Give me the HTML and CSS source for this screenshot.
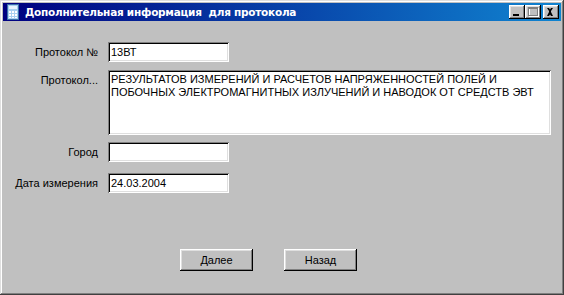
FILE: index.html
```html
<!DOCTYPE html>
<html lang="ru">
<head>
    <meta charset="UTF-8">
    <title>Дополнительная информация для протокола</title>
    <link rel="stylesheet" href="styles.css">
</head>
<body>

<div class="window">
    <div class="titlebar">
        <svg class="app-icon" width="16" height="16" viewBox="0 0 16 16">
            <rect x="2.5" y="0.5" width="11" height="15" fill="#a8d0f0" stroke="#3a6ea8"/>
            <rect x="4" y="2" width="8" height="3" fill="#e8f4ff"/>
            <g fill="#ffffff">
                <rect x="4" y="7" width="2" height="2"/>
                <rect x="7" y="7" width="2" height="2"/>
                <rect x="10" y="7" width="2" height="2"/>
                <rect x="4" y="10" width="2" height="2"/>
                <rect x="7" y="10" width="2" height="2"/>
                <rect x="10" y="10" width="2" height="2"/>
                <rect x="4" y="13" width="2" height="1"/>
                <rect x="7" y="13" width="2" height="1"/>
                <rect x="10" y="13" width="2" height="1"/>
            </g>
        </svg>
        <span class="title">Дополнительная информация&nbsp; для протокола</span>
        <div class="controls">
            <span class="ctl">
                <svg width="16" height="14" viewBox="0 0 16 14"><rect x="4" y="9" width="6" height="2" fill="#000"/></svg>
            </span>
            <span class="ctl">
                <svg width="16" height="14" viewBox="0 0 16 14">
                    <rect x="4.5" y="3.5" width="9" height="8" fill="none" stroke="#fff"/>
                    <rect x="3.5" y="2.5" width="9" height="8" fill="none" stroke="#808080"/>
                    <rect x="3" y="3" width="10" height="1" fill="#808080"/>
                </svg>
            </span>
            <span class="ctl close">
                <svg width="16" height="14" viewBox="0 0 16 14">
                    <path d="M4 3h2l1 1.5L8 3h2L8 6v1l2 4H8L7 9.5 6 11H4l2-4V6z" fill="#000"/>
                </svg>
            </span>
        </div>
    </div>

    <div class="content">
        <div class="row first">
            <span class="label">Протокол №</span>
            <div class="field short">13ВТ</div>
        </div>
        <div class="row memo-row">
            <span class="label">Протокол...</span>
            <div class="field memo">РЕЗУЛЬТАТОВ ИЗМЕРЕНИЙ И РАСЧЕТОВ НАПРЯЖЕННОСТЕЙ ПОЛЕЙ И<br>ПОБОЧНЫХ ЭЛЕКТРОМАГНИТНЫХ ИЗЛУЧЕНИЙ И НАВОДОК ОТ СРЕДСТВ ЭВТ</div>
        </div>
        <div class="row city-row">
            <span class="label">Город</span>
            <div class="field short"></div>
        </div>
        <div class="row">
            <span class="label">Дата измерения</span>
            <div class="field short">24.03.2004</div>
        </div>

        <div class="actions">
            <button class="btn">Далее</button>
            <button class="btn">Назад</button>
        </div>
    </div>
</div>

</body>
</html>
```

FILE: styles.css
```css
body {
    margin: 0;
    font-family: "Liberation Sans", Arial, sans-serif;
    font-size: 11px;
    color: #000;
    background: #c0c0c0;
}
.window {
    width: 564px;
    height: 295px;
    box-sizing: border-box;
    padding: 3px;
    background: #c0c0c0;
    box-shadow: inset -1px -1px #404040, inset 1px 1px #dfdfdf,
                inset -2px -2px #808080, inset 2px 2px #fff;
}
.titlebar {
    height: 18px;
    display: flex;
    align-items: center;
    background: linear-gradient(90deg, #000080, #1084d0);
    color: #fff;
    padding-left: 2px;
}
.app-icon {
    flex: none;
    margin-right: 4px;
}
.title {
    font-family: "DejaVu Sans", Verdana, sans-serif;
    font-weight: bold;
    font-size: 10.5px;
    letter-spacing: -0.25px;
    white-space: nowrap;
}
.controls {
    margin-left: auto;
    margin-right: 2px;
    display: flex;
}
.ctl {
    width: 16px;
    height: 14px;
    background: #c0c0c0;
    box-shadow: inset -1px -1px #000, inset 1px 1px #fff,
                inset -2px -2px #808080, inset 2px 2px #dfdfdf;
}
.ctl svg {
    display: block;
}
.ctl.close {
    margin-left: 2px;
}
.content {
    padding: 21px 0 0 8px;
}
.row {
    display: flex;
    align-items: center;
    gap: 10px;
    margin-bottom: 11px;
}
.row.first {
    margin-bottom: 8px;
}
.row.memo-row {
    align-items: flex-start;
    margin-bottom: 7px;
}
.row.memo-row .label {
    padding-top: 4px;
}
.label {
    width: 87px;
    text-align: right;
    white-space: nowrap;
}
.field {
    box-sizing: border-box;
    background: #fff;
    padding: 4px 3px 0;
    white-space: nowrap;
    box-shadow: inset 1px 1px #808080, inset -1px -1px #fff,
                inset 2px 2px #000, inset -2px -2px #dfdfdf;
}
.field.short {
    width: 121px;
    height: 20px;
}
.field.memo {
    width: 443px;
    height: 65px;
    line-height: 13px;
    padding-top: 3px;
}
.actions {
    display: flex;
    gap: 31px;
    margin: 56px 0 0 169px;
}
.btn {
    width: 73px;
    height: 22px;
    border: none;
    padding: 0;
    font-family: "Liberation Sans", Arial, sans-serif;
    font-size: 11px;
    color: #000;
    background: #c0c0c0;
    box-shadow: inset -1px -1px #000, inset 1px 1px #fff,
                inset -2px -2px #808080, inset 2px 2px #dfdfdf;
}
```
